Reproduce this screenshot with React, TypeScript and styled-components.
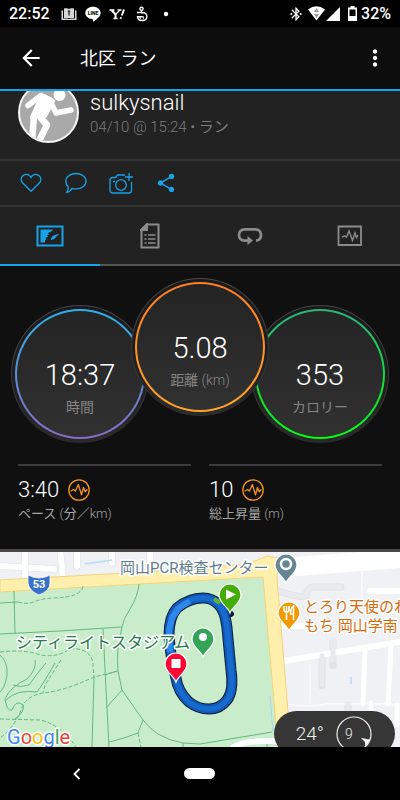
import React, { useState } from "react";
import styled, { createGlobalStyle } from "styled-components";
import { MdArrowBack, MdBluetoothConnected, MdMoreVert, MdShare } from "react-icons/md";

const GlobalStyle = createGlobalStyle`
  *, *::before, *::after { box-sizing: border-box; }
  body {
    margin: 0;
    background: #000;
    color: #fff;
    font-family: Roboto, "Noto Sans CJK JP", sans-serif;
  }
  button { font: inherit; color: inherit; background: none; border: 0; padding: 0; cursor: pointer; }
  h1, h2, p, dl, dt, dd { margin: 0; font-weight: inherit; }
  svg { display: block; }
`;

const blue = "#16a3e8";
const orange = "#f7941d";

const Screen = styled.div`
  display: flex;
  flex-direction: column;
  min-height: 100vh;
  background: #101010;
`;

const StatusBar = styled.div`
  display: flex;
  justify-content: space-between;
  align-items: center;
  height: 27px;
  padding: 0 9px;
  background: #000;
  font-size: 16px;
  font-weight: 500;
  line-height: 27px;
`;

const StatusLeft = styled.div`
  display: flex;
  align-items: center;
  gap: 8px;
`;

const Clock = styled.time`
  margin-right: 3px;
`;

const StatusRight = styled.div`
  display: flex;
  align-items: center;
`;

const StatusGap = styled.span<{ $w: number }>`
  width: ${(p) => p.$w}px;
`;

const AppBar = styled.header`
  display: flex;
  align-items: center;
  height: 64px;
  padding: 0 12px 0 18px;
  background: #0d0d0d;
  border-bottom: 2px solid ${blue};
`;

const BarButton = styled.button`
  display: flex;
  flex: none;
`;

const Title = styled.h1`
  flex: 1;
  padding: 2px 0 0 36px;
  font-size: 18px;
  line-height: 24px;
`;

const Profile = styled.section`
  display: flex;
  gap: 11px;
  height: 70px;
  padding: 0 18px;
  overflow: hidden;
  background: #222;
  border-bottom: 2px solid #333;
`;

const Avatar = styled.div`
  flex: none;
  width: 61px;
  height: 61px;
  margin-top: -9px;
  border: 2px solid #f4f4f4;
  border-radius: 50%;
  overflow: hidden;
  background: #a9a9a9;
`;

const Who = styled.div`
  display: flex;
  flex-direction: column;
`;

const UserName = styled.h2`
  font-size: 22px;
  font-weight: 300;
  line-height: 24px;
`;

const When = styled.p`
  color: #7c7c7c;
  font-size: 15px;
  font-weight: 300;
  line-height: 24px;
`;

const Kana = styled.span`
  font-weight: 400;
`;

const Actions = styled.div`
  display: flex;
  height: 46px;
  padding: 0 8px;
  background: #222;
  border-bottom: 2px solid #333;
  color: ${blue};
`;

const ActionButton = styled.button`
  display: grid;
  place-items: center;
  width: 45px;
`;

const Tabs = styled.div`
  display: grid;
  grid-template-columns: repeat(4, 1fr);
  height: 59px;
  background: #222;
`;

const Tab = styled.button<{ $active: boolean }>`
  display: grid;
  place-items: center;
  color: ${(p) => (p.$active ? blue : "#8c8c8c")};
  border-bottom: 2px solid ${(p) => (p.$active ? blue : "#555")};
`;

const Dials = styled.dl`
  display: flex;
  justify-content: center;
  align-items: flex-end;
  padding: 12px 0 21px;
`;

const Dial = styled.div<{ $raised?: boolean }>`
  position: relative;
  z-index: ${(p) => (p.$raised ? 1 : 0)};
  width: 138px;
  height: 138px;
  margin: ${(p) => (p.$raised ? "0 -18px 27px" : "0")};
  padding: 3px;
  border: 1px solid transparent;
  border-radius: 50%;
  background:
    linear-gradient(#1a1a1c, #1e1e1f 50%, #2b2b2b) padding-box,
    linear-gradient(#484848, #2b2b2b) border-box;
`;

const Ring = styled.div<{ $from: string; $to: string }>`
  display: flex;
  flex-direction: column-reverse;
  align-items: center;
  justify-content: flex-end;
  height: 100%;
  padding-top: 46px;
  border: 2px solid transparent;
  border-radius: 50%;
  background:
    linear-gradient(#242424, #313131) padding-box,
    linear-gradient(${(p) => p.$from}, ${(p) => p.$to}) border-box;
`;

const DialValue = styled.dd`
  font-size: 29px;
  font-weight: 300;
  line-height: 36px;
`;

const DialLabel = styled.dt`
  color: #858585;
  font-size: 14px;
  font-weight: 300;
  line-height: 28px;
`;

const Stats = styled.dl`
  display: grid;
  grid-template-columns: 1fr 1fr;
  gap: 18px;
  padding: 0 18px 25px;
`;

const Stat = styled.div`
  display: flex;
  flex-direction: column-reverse;
  padding-top: 10px;
  border-top: 2px solid #3b3b3b;
`;

const StatValue = styled.dd`
  display: flex;
  align-items: center;
  gap: 9px;
  font-size: 22px;
  font-weight: 300;
  line-height: 28px;
`;

const StatLabel = styled.dt`
  color: #a5a5a5;
  font-size: 13px;
  font-weight: 300;
  line-height: 20px;
`;

const MapPanel = styled.section`
  position: relative;
  flex: 1;
  min-height: 198px;
  display: flex;
  overflow: hidden;
  border-top: 3px solid #4a4848;
  background: #eff1f4;
`;

const MapDrawing = styled.svg`
  width: 100%;
  height: auto;
  min-height: 195px;
`;

const Weather = styled.div`
  position: absolute;
  right: 5px;
  bottom: -9px;
  display: flex;
  align-items: center;
  justify-content: flex-end;
  gap: 12px;
  width: 121px;
  height: 45px;
  padding-right: 23px;
  border-radius: 23px;
  background: #363636;
  color: #eee;
  font-size: 19px;
  font-weight: 300;
`;

const NavBar = styled.nav`
  display: grid;
  grid-template-columns: repeat(3, 1fr);
  align-items: center;
  justify-items: center;
  height: 53px;
  padding: 0 16px;
  background: #000;
`;

const HomePill = styled.button`
  width: 31px;
  height: 11px;
  border-radius: 6px;
  background: #fff;
`;

function BookIcon() {
  return (
    <svg width="16" height="14" viewBox="0 0 16 14" fill="#d8d8d8">
      <path d="M3 1.500C5 1 7 1 8 2c1-1 3-1 5-.5V11H3z" />
      <path d="M.5 3.500H2V11.500h5l1 .8 1-.8h5v-8h1.500V13H.5z" />
      <circle cx="8" cy="4.500" r="1.300" fill="#333" />
      <path d="M7.300 6h1.500v2.500H7.300z" fill="#333" />
    </svg>
  );
}

function LineIcon() {
  return (
    <svg width="16" height="16" viewBox="0 0 16 16">
      <path d="M8 .8c4.300 0 7.700 2.700 7.700 6.200 0 3.200-3.500 6-7 8.400-.7.400-.8 0-.7-.6.300-1.300 0-1.500-1-1.700C3.200 12.600.3 10.200.3 7 .3 3.500 3.700.8 8 .8z" fill="#fff" />
      <text x="8" y="9" textAnchor="middle" fontSize="5" fontWeight="900" fontFamily="Roboto, sans-serif" fill="#111">LINE</text>
    </svg>
  );
}

function YahooIcon() {
  return (
    <svg width="16" height="16" viewBox="0 0 16 16" fill="none" stroke="#fff">
      <path d="M.5 4h5M8.500 4h4" strokeWidth="1.300" />
      <path d="M2.500 4l4 4.500V12" strokeWidth="2" />
      <path d="M11 4L6.500 8.500M4.500 12.500h4" strokeWidth="1.300" />
      <path d="M15 3.500L12.800 9.500M12 11.200l-.5 1.500" strokeWidth="2" />
    </svg>
  );
}

function BuddyIcon() {
  return (
    <svg width="16" height="16" viewBox="0 0 16 16" fill="none" stroke="#fff" strokeWidth="1.400">
      <circle cx="8.500" cy="2.800" r="1.600" />
      <path d="M8.500 4.500v3M4 6.500h5c6.500 0 6.500 8 0 8-3.500 0-4.500-1.500-4.500-3.700h6" />
      <path d="M6.500 12h1.500M10 12h1" />
    </svg>
  );
}

function RunnerPicture() {
  return (
    <svg width="57" height="57" viewBox="20 84 57 57" fill="none" stroke="#fff" strokeLinecap="round" strokeLinejoin="round">
      <circle cx="59.500" cy="95" r="6" fill="#fff" stroke="none" />
      <path d="M28 105.500l13-10 10 5" strokeWidth="5.500" />
      <path d="M45 96.500l8 4.500-8 15-13 1 6-13z" fill="#fff" strokeWidth="4" />
      <path d="M51 103l5 10 15-3" strokeWidth="5.500" />
      <path d="M40 117l7 8-7 14M34 116l-2 24" strokeWidth="6.500" />
    </svg>
  );
}

function PulseIcon() {
  return (
    <svg width="22" height="22" viewBox="0 0 22 22" fill="none" stroke={orange} strokeWidth="1.300" strokeLinejoin="round" strokeLinecap="round">
      <circle cx="11" cy="11" r="10.200" />
      <path d="M3 12l2.500-1.500 2 1.500L10.300 5.500l3.200 10.300 2-7.300 1.700 4.300 1.800-2" />
    </svg>
  );
}

const HeartIcon = () => (
  <svg width="22" height="20" viewBox="0 0 22 20" fill="none" stroke="currentColor" strokeWidth="1.300">
    <path d="M11 18.300L2.500 9.800C-1 5.200 3.500.2 8 1.700c1.400.5 2.300 1.400 3 2.800.7-1.400 1.600-2.300 3-2.800 4.500-1.500 9 3.500 5.500 8.100z" />
  </svg>
);

const CommentIcon = () => (
  <svg width="24" height="22" viewBox="0 0 24 22" fill="none" stroke="currentColor" strokeWidth="1.300">
    <path d="M12 1.500c5.600 0 10 3.300 10 7.700s-4.400 7.700-10 7.700c-1.300 0-2.700-.2-3.900-.6C7 18.500 5 20 2.800 20.300c1-1.400 1.600-3.300 1.400-5.600-1.500-1.400-2.400-3.300-2.400-5.500 0-4.400 4.600-7.700 10.200-7.700z" />
  </svg>
);

const CameraIcon = () => (
  <svg width="24" height="22" viewBox="0 0 24 22" fill="none" stroke="currentColor" strokeWidth="1.300">
    <path d="M16 3.500L15.500 3H8.500L6.700 5.500H3.500a2.500 2.500 0 0 0-2.500 2.500v10.500A2.500 2.500 0 0 0 3.500 21h16.500a2.500 2.500 0 0 0 2.500-2.500V10" />
    <circle cx="12" cy="13" r="5.300" />
    <path d="M20 1v8M16 5h8M4 9.500h2" />
  </svg>
);

const MapTabIcon = () => (
  <svg width="28" height="22" viewBox="0 0 28 22" fill="currentColor">
    <path d="M1.500 1.500h25v19h-25z" fill="none" stroke="currentColor" strokeWidth="2" />
    <path d="M4.500 4.500H17l-1 1.500-4 2 1 1.500-2 .8 1 1.500-2.500 1.200 1 1.500-1.500.5v2.500H4.500z" />
    <path d="M15 15c0-4 3-5.300 8-6-1 1.500-1.500 1.500-3 2.800-.5 1.900-3 2.700-5 3.200z" />
  </svg>
);

const DetailsTabIcon = () => (
  <svg width="20" height="26" viewBox="0 0 20 26" fill="none" stroke="currentColor" strokeWidth="2">
    <path d="M7 1.500h11.500v23H1.500V7z" />
    <path d="M7 1v6H1z" fill="currentColor" />
    <path d="M4.500 12h2M8 12h7.500M4.500 16h2M8 16h7.500M4.500 20h2M8 20h7.500" strokeWidth="1.600" />
  </svg>
);

const LapsTabIcon = () => (
  <svg width="26" height="18" viewBox="0 0 26 18" fill="none" stroke="currentColor" strokeWidth="2.700">
    <path d="M11 13.700H8C3.500 13.700 2 10.500 2 8s1.500-5.700 6-5.700h10c4.500 0 6 3.200 6 5.700s-1.500 5.200-5 5.700" />
    <path d="M10.500 9l5.500 4.600-5.500 4.400z" fill="currentColor" stroke="none" />
  </svg>
);

const ChartTabIcon = () => (
  <svg width="26" height="22" viewBox="0 0 26 22" fill="none" stroke="currentColor">
    <path d="M1.500 1.500h22.500v18.500H1.500z" strokeWidth="1.800" />
    <path d="M5 12l2.500-1 2 1L12 6l3.500 9.500L18 8l1.500 4.500L21 10" strokeWidth="1.400" />
  </svg>
);

type PinProps = { x: number; y: number; color: string; children?: React.ReactNode };

function Pin({ x, y, color, children }: PinProps) {
  return (
    <g transform={`translate(${x} ${y})`}>
      <path d="M0 0C-2-6-11-10-11-18a11 11 0 0 1 22 0C11-10 2-6 0 0z" fill={color} stroke="#fff" strokeWidth="1.200" />
      {children}
    </g>
  );
}

const MapLabel = styled.text`
  font-family: Roboto, "Noto Sans CJK JP", sans-serif;
  paint-order: stroke;
  stroke: #fff;
  stroke-width: 3px;
  stroke-linejoin: round;
`;

const track =
  "M203 598q-14 0-26 10-8 9-8 27 1 20 7 43 2 14 13 24 9 7 20 7t18-9q7-9 4-30l-4-42q-2-18-9-24-6-6-15-6z";

function RouteMap() {
  return (
    <MapDrawing viewBox="0 552 400 195" preserveAspectRatio="xMinYMin slice" role="img" aria-label="ルートマップ">
      <path d="M0 552h400v195H0z" fill="#eff1f4" />
      <g fill="none" stroke="#e0e2e5" strokeLinecap="round" strokeWidth="7">
        <path d="M25 548v32M60 548l3 30M77 548v18M112 548v15M0 566l54 3M150 548v22" />
        <path d="M276 590q20 8 30 6 1-9 8-9h27M333 666v-24M322 686v-30M348 720v-15" />
      </g>
      <g fill="none" stroke="#fff" strokeLinecap="round">
        <path d="M25 548v32M60 548l3 30M77 548v18M112 548v15M0 566l54 3M150 548v22" strokeWidth="6" />
        <path d="M290 567l115-9" strokeWidth="19" />
        <path d="M277 626h34M370 591h40M283 661l117-19" strokeWidth="6" />
        <path d="M365 650l-2 53M391 646l-3 58M371 703v20M397 705v20" strokeWidth="5" />
        <path d="M285 704q25 4 40 0h75M362 570v30M310 665v38" strokeWidth="1" />
        <path d="M276 590q20 8 30 6 1-9 8-9h27M322 684v-28M348 720v-15M333 660v-20" stroke="#e9eaed" strokeWidth="5" />
      </g>
      <path d="M85 564l27-4M351 677v7" stroke="#b9dcf6" strokeWidth="1.500" />

      <path d="M0 592l263-16 16 171H0z" fill="#c9edcb" />
      <path d="M0 580l90-5 110-6 50-6 17-7 11 2-1 20 11 134 1 35h-11l-15-170L0 592z" fill="#ffefac" stroke="#f3d37b" />
      <path d="M232 748q10-8 45-7" fill="none" stroke="#fff" strokeWidth="6" />
      <path d="M270 696l3 36" stroke="#a9d5ee" />

      <g fill="none" stroke="#62b981" strokeWidth="1">
        <path d="M14 591l1 43M0 603l18-1M0 634l60-3 62-4M139 584q-1 12-9 25-7 10-8 18l-4 21q-1 12 0 23l4 19 21 30q8 10 15 14 12 7 25 9l17 1 72-12" />
        <path d="M103 629l3 60 3 58M94 677l-2 70M105 675l12-4M122 690l-16 18M143 720l-5 13q-15 6-29 9M183 743v4M267 744v3" />
        <path d="M0 655q8 7 7 20-2 13-7 17" />
        <path d="M35 660q2 9-8 19-17 8-22 20 2 13 7 11 4-11 11-5 2 7-8 14M46 663q-8 9-17 22-9 3-16 0M55 663q-10 18-18 29-20-3-31 8" />
        <g strokeDasharray="4 2">
          <path d="M18 602q10 3 18-1 9-3 18-3 28-1 29-12M0 652q25-3 40 3 18 3 29-6 22-2 24 15l1 13M61 660l-16 25-2 8M118 671l-24 6q-30 14-51 16-17 3-21 15-8 20-22 30M0 719l40 1q20 4 36 27M138 733l3 14" />
        </g>
      </g>

      <path d="M28 575q11 6 22 0v8q0 8-11 12-10-4-11-12z" fill="#3871c8" stroke="#fff" strokeWidth=".8" />
      <text x="39" y="588" textAnchor="middle" fontSize="11" fontWeight="700" fontFamily="Roboto, sans-serif" fill="#fff">53</text>

      <MapLabel x="120" y="573" fontSize="15" fill="#5f7d8c">岡山PCR検査センター</MapLabel>
      <MapLabel x="304" y="612" fontSize="15" fill="#d76c0c">とろり天使のわ</MapLabel>
      <MapLabel x="304" y="631" fontSize="15" fill="#d76c0c">もち 岡山学南</MapLabel>

      <g fill="none" strokeLinejoin="round">
        <path d="M220 603l11 11" stroke="#0b1d36" strokeWidth="6" strokeLinecap="round" />
        <path d={track} stroke="#0b1d36" strokeWidth="11" />
        <path d={track} stroke="#1259b5" strokeWidth="9" />
        <path d={track} stroke="#176bd0" strokeWidth="5" />
        <path d="M190 601l-11 7-7 10-3 12 1 22" stroke="#2e88ec" strokeWidth="6" />
        <path d="M214 599l6 4" stroke="#62b52a" strokeWidth="4" />
      </g>
      <MapLabel x="16" y="648" fontSize="16" fill="#247a4b">シティライトスタジアム</MapLabel>

      <Pin x={286} y={583} color="#678694">
        <circle cy="-19" r="5" fill="none" stroke="#fff" strokeWidth="2.500" />
      </Pin>
      <Pin x={203} y={657} color="#34a557">
        <circle cy="-20" r="4" fill="#fff" />
      </Pin>
      <Pin x={230} y={613} color="#44ad05">
        <path d="M-4-23.500v10l10-5z" fill="#fff" />
      </Pin>
      <Pin x={176} y={682} color="#fb0736">
        <path d="M-4.500-23h9v9h-9z" fill="#fff" />
      </Pin>
      <Pin x={289} y={631} color="#f29900">
        <path d="M-5-25v4q0 2 2.500 2T0-21v-4M-2.500-25v14M4.500-11v-14q-3 2-3 8h3" fill="none" stroke="#fff" strokeWidth="1.600" />
      </Pin>

      <MapLabel x="7" y="744" fontSize="20">
        <tspan fill="#4285f4">G</tspan>
        <tspan fill="#ea4335">o</tspan>
        <tspan fill="#fbbc05">o</tspan>
        <tspan fill="#4285f4">g</tspan>
        <tspan fill="#34a853">l</tspan>
        <tspan fill="#ea4335">e</tspan>
      </MapLabel>
    </MapDrawing>
  );
}

const dials = [
  { value: "18:37", label: <Kana>時間</Kana>, from: "#2fb0e8", to: "#8a6cc4" },
  { value: "5.08", label: <><Kana>距離</Kana> (km)</>, from: "#ff7d26", to: "#ffa526", raised: true },
  { value: "353", label: <Kana>カロリー</Kana>, from: "#2bb37d", to: "#00ff0d" },
];

const stats = [
  { value: "3:40", label: <><Kana>ペース</Kana> (<Kana>分／</Kana>km)</> },
  { value: "10", label: <><Kana>総上昇量</Kana> (m)</> },
];

const actions = [
  { name: "いいね", icon: <HeartIcon /> },
  { name: "コメント", icon: <CommentIcon /> },
  { name: "写真を追加", icon: <CameraIcon /> },
  { name: "共有", icon: <MdShare size={22} /> },
];

const tabs = [
  { name: "マップ", icon: <MapTabIcon /> },
  { name: "詳細", icon: <DetailsTabIcon /> },
  { name: "ラップ", icon: <LapsTabIcon /> },
  { name: "グラフ", icon: <ChartTabIcon /> },
];

export default function App() {
  const [tab, setTab] = useState(0);
  return (
    <Screen>
      <GlobalStyle />
      <StatusBar>
        <StatusLeft>
          <Clock>22:52</Clock>
          <BookIcon />
          <LineIcon />
          <YahooIcon />
          <BuddyIcon />
          <svg width="16" height="16" viewBox="0 0 16 16"><circle cx="9" cy="8" r="2.200" fill="#fff" /></svg>
        </StatusLeft>
        <StatusRight>
          <MdBluetoothConnected size={16} />
          <StatusGap $w={4} />
          <svg width="17" height="15" viewBox="0 0 17 15">
            <path d="M0 3.500q8.500-6.500 17 0L8.500 14.500z" fill="#fff" />
            <path d="M8.500 2l2.500 4H6zM8.500 12L6 8h5z" fill="#999" />
          </svg>
          <StatusGap $w={1} />
          <svg width="14" height="14" viewBox="0 0 14 14"><path d="M14 0v14H0z" fill="#fff" /></svg>
          <StatusGap $w={8} />
          <svg width="9" height="15" viewBox="0 0 9 15">
            <path d="M2.500 0h4v1.500H9V15H0V1.500h2.500z" fill="#fff" />
            <path d="M1.500 3.500h6V10h-6z" fill="#000" />
          </svg>
          <StatusGap $w={4} />
          <span>32%</span>
        </StatusRight>
      </StatusBar>

      <AppBar>
        <BarButton aria-label="戻る"><MdArrowBack size={26} /></BarButton>
        <Title>北区 ラン</Title>
        <BarButton aria-label="メニュー"><MdMoreVert size={26} /></BarButton>
      </AppBar>

      <Profile>
        <Avatar><RunnerPicture /></Avatar>
        <Who>
          <UserName>sulkysnail</UserName>
          <When>04/10 @ 15:24 • <Kana>ラン</Kana></When>
        </Who>
      </Profile>

      <Actions>
        {actions.map((a) => (
          <ActionButton key={a.name} aria-label={a.name}>{a.icon}</ActionButton>
        ))}
      </Actions>

      <Tabs role="tablist">
        {tabs.map((t, i) => (
          <Tab key={t.name} role="tab" aria-label={t.name} aria-selected={tab === i} $active={tab === i} onClick={() => setTab(i)}>
            {t.icon}
          </Tab>
        ))}
      </Tabs>

      <Dials>
        {dials.map((d) => (
          <Dial key={d.value} $raised={d.raised}>
            <Ring $from={d.from} $to={d.to}>
              <DialLabel>{d.label}</DialLabel>
              <DialValue>{d.value}</DialValue>
            </Ring>
          </Dial>
        ))}
      </Dials>

      <Stats>
        {stats.map((s) => (
          <Stat key={s.value}>
            <StatLabel>{s.label}</StatLabel>
            <StatValue>{s.value}<PulseIcon /></StatValue>
          </Stat>
        ))}
      </Stats>

      <MapPanel>
        <RouteMap />
        <Weather>
          <span>24°</span>
          <svg width="36" height="36" viewBox="0 0 36 36">
            <circle cx="18" cy="18" r="17" fill="none" stroke="#eee" strokeWidth="1.200" />
            <text x="13" y="23" textAnchor="middle" fontSize="14" fontWeight="300" fontFamily="Roboto, sans-serif" fill="#eee">9</text>
            <path d="M25 22l9 1.500L29.500 31l-.5-5z" fill="#fff" />
          </svg>
        </Weather>
      </MapPanel>

      <NavBar>
        <button aria-label="戻る">
          <svg width="10" height="14" viewBox="0 0 10 14" fill="none" stroke="#fff" strokeWidth="1.800"><path d="M7.500 2l-5 5 5 5" /></svg>
        </button>
        <HomePill aria-label="ホーム" />
      </NavBar>
    </Screen>
  );
}
